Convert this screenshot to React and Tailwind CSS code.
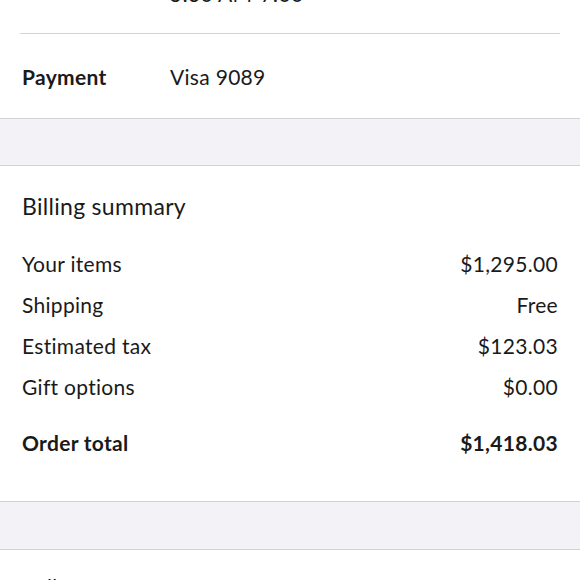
import React from "react";

const rows = [
  { label: "Your items", value: "$1,295.00" },
  { label: "Shipping", value: "Free" },
  { label: "Estimated tax", value: "$123.03" },
  { label: "Gift options", value: "$0.00" },
];

const App = () => {
  return (
    <div className="h-[580px] overflow-hidden bg-white text-[#1a1a1a] font-['Lato','Liberation_Sans',sans-serif] tracking-[0.3px]">
      {/* Pickup hours, cut off at top */}
      <div className="h-[34px] px-[20px] flex flex-col">
        <p className="-mt-[18px] pl-[150px] text-[21px] leading-[24px]">5:30 AM-7:00</p>
        <div className="mt-auto border-b border-[#d4d4d8]" />
      </div>

      {/* Payment */}
      <div className="h-[84px] px-[22px] pt-[2px] flex items-center">
        <span className="w-[148px] text-[21px] leading-[24px] font-bold">Payment</span>
        <span className="text-[21px] leading-[24px]">Visa 9089</span>
      </div>

      <div className="h-[48px] bg-[#f2f2f7] border-y border-[#d2d2d6]" />

      {/* Billing summary */}
      <div className="px-[22px] pt-[26px] pb-[38px]">
        <h2 className="text-[23px] leading-[28px] mb-[23px]">Billing summary</h2>
        {rows.map((r) => (
          <div key={r.label} className="flex justify-between text-[21px] leading-[41px]">
            <span>{r.label}</span>
            <span>{r.value}</span>
          </div>
        ))}
        <div className="mt-[15px] flex justify-between text-[21px] leading-[41px] font-bold">
          <span>Order total</span>
          <span>$1,418.03</span>
        </div>
      </div>

      <div className="h-[49px] bg-[#f2f2f7] border-y border-[#d2d2d6]" />

      {/* Customer care */}
      <div className="px-[22px] pt-[25px] flex justify-between text-[21px] leading-[24px]">
        <span>Call Customer Care</span>
        <span>1-800-966-6546</span>
      </div>
    </div>
  );
};

export default App;
